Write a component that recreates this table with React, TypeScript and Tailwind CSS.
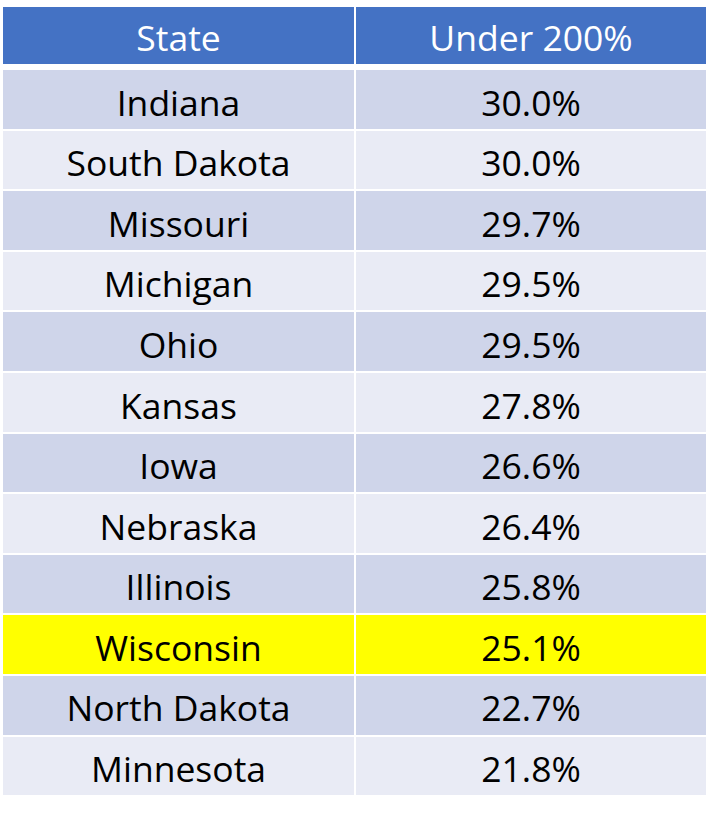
const ROWS: { state: string; pct: string }[] = [
  { state: 'Indiana', pct: '30.0%' },
  { state: 'South Dakota', pct: '30.0%' },
  { state: 'Missouri', pct: '29.7%' },
  { state: 'Michigan', pct: '29.5%' },
  { state: 'Ohio', pct: '29.5%' },
  { state: 'Kansas', pct: '27.8%' },
  { state: 'Iowa', pct: '26.6%' },
  { state: 'Nebraska', pct: '26.4%' },
  { state: 'Illinois', pct: '25.8%' },
  { state: 'Wisconsin', pct: '25.1%' },
  { state: 'North Dakota', pct: '22.7%' },
  { state: 'Minnesota', pct: '21.8%' },
]

export default function App() {
  return (
    <div className="w-[712px] h-[823px] bg-white pl-[3px] pt-[7px] font-['Open_Sans',sans-serif] text-[35.5px] leading-none">
      <div className="w-[703px]">
        {/* Header */}
        <div className="grid grid-cols-[351px_350px] gap-x-[2px] text-white">
          <div className="h-[57px] bg-[#4472c4] flex items-center justify-center pt-[5px]">State</div>
          <div className="h-[57px] bg-[#4472c4] flex items-center justify-center pt-[5px]">Under 200%</div>
        </div>

        {/* Body */}
        <div className="mt-[6px] grid grid-cols-[351px_350px] gap-x-[2px] gap-y-[2px] text-black">
          {ROWS.map((r, i) => {
            const cls =
              r.state === 'Wisconsin'
                ? 'bg-[#ffff00]'
                : i % 2 === 0
                  ? 'bg-[#cfd5ea]'
                  : 'bg-[#e9ebf5]'
            return [
              <div key={r.state + 'a'} className={`h-[58.6px] ${cls} flex items-center justify-center pt-[6px]`}>
                {r.state}
              </div>,
              <div key={r.state + 'b'} className={`h-[58.6px] ${cls} flex items-center justify-center pt-[6px]`}>
                {r.pct}
              </div>,
            ]
          })}
        </div>
      </div>
    </div>
  )
}
